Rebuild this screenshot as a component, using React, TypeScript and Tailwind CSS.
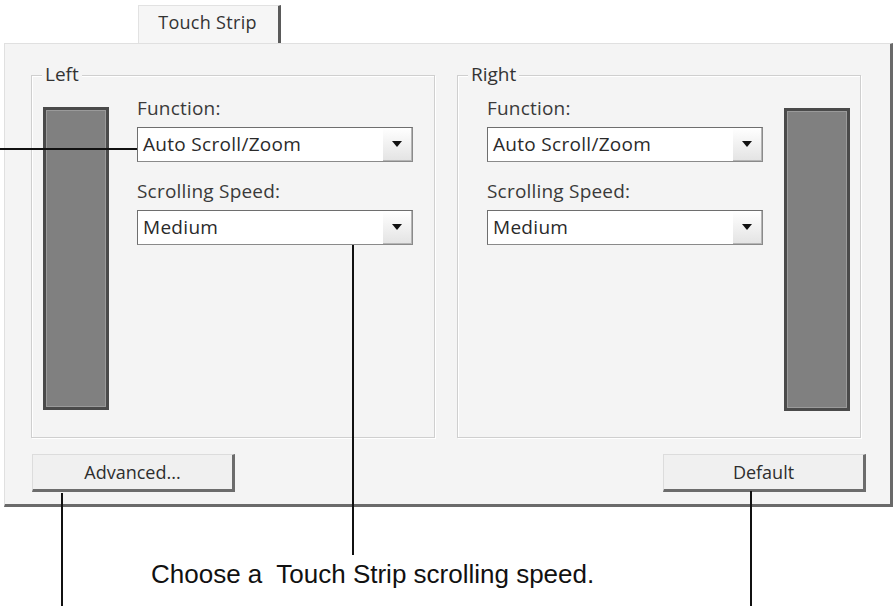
import React from "react";

const ui = "font-['Open_Sans',sans-serif]";

function Combo({ value }: { value: string }) {
  return (
    <div className="flex h-[35px] w-[276px] border border-[#8a8a8a] border-t-[#6e6e6e] border-l-[#6e6e6e] bg-white">
      <div className={`flex-1 pl-[5px] text-[19px] tracking-[0.3px] leading-[33px] text-[#2a2a2a] ${ui}`}>{value}</div>
      <div className="flex w-[29px] items-center justify-center bg-gradient-to-b from-white to-[#e4e4e4] border-b border-r border-[#b5b5b5]">
        <svg width="10" height="6" viewBox="0 0 10 6">
          <path d="M0 0 L10 0 L5 6 Z" fill="#111" />
        </svg>
      </div>
    </div>
  );
}

function Strip() {
  return <div className="h-[303px] w-[66px] border-[3px] border-[#4a4a4a] bg-[#808080] shadow-[inset_0_0_0_1px_#9a9a9a]" />;
}

const labelCls = `text-[19px] tracking-[0.2px] leading-[24px] text-[#3a3a3a] ${ui}`;

function Fields() {
  return (
    <div className="flex flex-col">
      <div className={labelCls}>Function:</div>
      <div className="mt-[7px]">
        <Combo value="Auto Scroll/Zoom" />
      </div>
      <div className={`mt-[17px] ${labelCls}`}>Scrolling Speed:</div>
      <div className="mt-[7px]">
        <Combo value="Medium" />
      </div>
    </div>
  );
}

function Group({ label, side }: { label: string; side: "left" | "right" }) {
  return (
    <div className="relative h-[363px] w-[404px] border border-[#cfcfcf] shadow-[inset_1px_1px_0_#ffffff,1px_1px_0_#ffffff]">
      <div className={`absolute left-[10px] top-[-14px] bg-[#f4f4f4] px-[3px] text-[19px] leading-[24px] text-[#333] ${ui}`}>
        {label}
      </div>
      {side === "left" ? (
        <div className="flex items-start pl-[11px]">
          <div className="mt-[31px]">
            <Strip />
          </div>
          <div className="ml-[28px] mt-[20px]">
            <Fields />
          </div>
        </div>
      ) : (
        <div className="flex items-start pl-[29px]">
          <div className="mt-[20px]">
            <Fields />
          </div>
          <div className="ml-[21px] mt-[32px]">
            <Strip />
          </div>
        </div>
      )}
    </div>
  );
}

function Btn({ label }: { label: string }) {
  return (
    <div
      className={`flex h-[38px] w-[203px] items-center justify-center border border-[#dcdcdc] border-r-[3px] border-b-[3px] border-r-[#6c6c6c] border-b-[#6c6c6c] bg-[#f0f0f0] text-[18px] text-[#2e2e2e] ${ui}`}
    >
      {label}
    </div>
  );
}

export default function App() {
  return (
    <div className="relative h-[606px] w-[895px] overflow-hidden bg-white">
      <div className="flex pl-[138px] pt-[5px]">
        <div className="flex h-[38px] w-[143px] items-start justify-center border-l border-t border-[#e2e2e2] border-r-[3px] border-r-[#5a5a5a] bg-[#f6f6f6] pr-[2px] pt-[4px]">
          <span className={`text-[18px] tracking-[0.3px] leading-[24px] text-[#333] ${ui}`}>Touch Strip</span>
        </div>
      </div>
      <div className="ml-[4px] h-[464px] w-[889px] border-l border-t border-[#e0e0e0] border-r-[3px] border-b-[3px] border-r-[#6a6a6a] border-b-[#6a6a6a] bg-[#f4f4f4] pl-[26px] pt-[31px]">
        <div className="flex gap-[22px]">
          <Group label="Left" side="left" />
          <Group label="Right" side="right" />
        </div>
        <div className="mt-[16px] flex justify-between pr-[24px]">
          <div className="ml-[1px]">
            <Btn label="Advanced..." />
          </div>
          <Btn label="Default" />
        </div>
      </div>
      <div className="mt-[53px] pl-[151px] font-['Liberation_Sans',sans-serif] text-[26px] leading-[28px] text-[#111]">
        Choose a&nbsp; Touch Strip scrolling speed.
      </div>

      {/* callout lines */}
      <div className="absolute left-0 top-[148px] h-[1.5px] w-[137px] bg-[#111]" />
      <div className="absolute left-[352px] top-[245px] h-[310px] w-[1.5px] bg-[#111]" />
      <div className="absolute left-[61px] top-[493px] h-[113px] w-[1.5px] bg-[#111]" />
      <div className="absolute left-[750px] top-[491px] h-[115px] w-[1.5px] bg-[#111]" />
    </div>
  );
}
